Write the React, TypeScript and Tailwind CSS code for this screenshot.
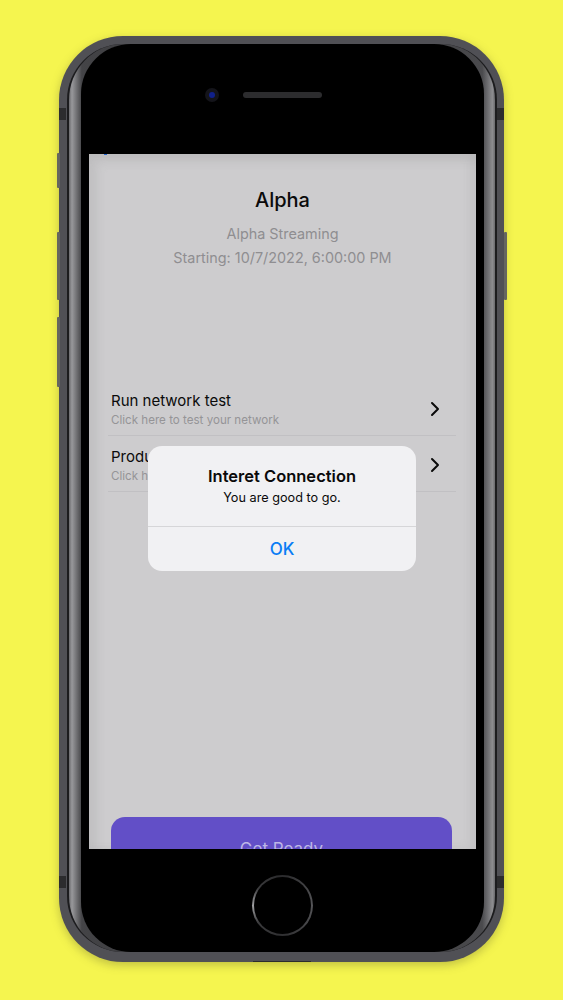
import React from "react";
import { ChevronRight } from "lucide-react";

function Row({ title, sub }: { title: string; sub: string }) {
  return (
    <div className="ml-[19px] mr-[20px] flex h-[56px] items-center justify-between border-b border-[#c1c0c3] pl-[3px] pr-[9px] pt-[2px]">
      <div className="flex flex-col pt-[2px]">
        <span className="text-[15px] leading-[20px] text-[#0a0a0a]">{title}</span>
        <span className="mt-[1px] text-[11.6px] leading-[16px] text-[#959497]">{sub}</span>
      </div>
      <ChevronRight className="h-[24px] w-[24px] text-[#0a0a0a]" strokeWidth={2} />
    </div>
  );
}

function SideButton({ cls }: { cls: string }) {
  return <div className={`absolute w-[3px] rounded-[1px] bg-[#66665f] ${cls}`} />;
}

function Notch({ cls }: { cls: string }) {
  return <div className={`absolute bg-[#2c2c2e] ${cls}`} />;
}

export default function App() {
  return (
    <div className="h-[1000px] w-[563px] overflow-hidden bg-[#f5f54f] pl-[59px] pt-[36px] [font-family:Inter,'Liberation_Sans',sans-serif]">
      <div className="relative h-[926px] w-[445px] rounded-[64px] bg-[#505055] pb-[10px] pl-[8px] pr-[7px] pt-[8px] shadow-[0_3px_10px_rgba(90,90,40,0.35)]">
        <SideButton cls="left-[-2px] top-[117px] h-[35px]" />
        <SideButton cls="left-[-2px] top-[196px] h-[68px]" />
        <SideButton cls="left-[-2px] top-[281px] h-[70px]" />
        <SideButton cls="right-[-3px] top-[196px] h-[68px]" />
        <Notch cls="left-0 top-[72px] h-[12px] w-[7px]" />
        <Notch cls="right-0 top-[72px] h-[12px] w-[7px]" />
        <Notch cls="bottom-[74px] left-0 h-[12px] w-[7px]" />
        <Notch cls="bottom-[74px] right-0 h-[12px] w-[7px]" />
        <Notch cls="bottom-0 left-[194px] h-[1px] w-[58px]" />
        <div className="h-full rounded-[56px] border-x-[2px] border-[#1c1c1e] bg-[linear-gradient(90deg,#6a6a6d_0%,#98989b_0.7%,#444447_3%,#2a2a2c_50%,#4a4a4d_97%,#8c8c8f_99.4%,#6a6a6d_100%)] pl-[12px] pr-[11px]">
          <div className="flex h-full flex-col items-center rounded-[50px] bg-black">
            <div className="flex h-[110px] w-full items-center justify-center gap-[24px] pb-[8px] pr-[38px]">
              <div className="flex h-[14px] w-[14px] items-center justify-center rounded-full bg-[#14141a]">
                <div className="h-[6px] w-[6px] rounded-full bg-[#10208a]" />
              </div>
              <div className="h-[6px] w-[79px] rounded-full bg-[#2c2c2e]" />
            </div>
            <div className="relative h-[695px] w-[387px] shrink-0 overflow-hidden bg-[#cdccce] shadow-[inset_8px_8px_10px_rgba(150,150,150,0.22),inset_-6px_0_8px_rgba(150,150,150,0.18)]">
              <div className="absolute left-[15px] top-[-1px] h-[2px] w-[3px] bg-[#2a6ad0]" />
              <div className="flex h-full flex-col">
                <div className="pt-[33px] text-center text-[20px] font-medium leading-[26px] text-[#0a0a0a]">Alpha</div>
                <div className="mt-[9px] text-center text-[14.4px] leading-[24px] text-[#8f8e91]">Alpha Streaming</div>
                <div className="text-center text-[14.4px] leading-[24px] text-[#8f8e91]">Starting: 10/7/2022, 6:00:00 PM</div>
                <div className="mt-[110px] flex flex-col">
                  <Row title="Run network test" sub="Click here to test your network" />
                  <Row title="Product check" sub="Click here to check your product" />
                </div>
                <div className="ml-[22px] mr-[24px] mt-[325px] flex h-[70px] shrink-0 justify-center rounded-[14px] bg-[#624fc7] pt-[20px] text-[17px] leading-[24px] text-[#bdb6e6]">
                  Get Ready
                </div>
              </div>
              <div className="absolute left-[59px] top-[292px] flex h-[125px] w-[268px] flex-col rounded-[14px] bg-[#f1f1f3] text-center">
                <div className="flex h-[81px] flex-col items-center border-b border-[#d6d6d8] pt-[19px]">
                  <span className="text-[16.5px] font-semibold leading-[22px] text-[#0a0a0a]">Interet Connection</span>
                  <span className="mt-[2px] text-[12.7px] leading-[18px] text-[#0a0a0a]">You are good to go.</span>
                </div>
                <div className="flex flex-1 items-center justify-center pt-[2px] text-[17px] font-medium text-[#0a7df5]">OK</div>
              </div>
            </div>
            <div className="flex w-full flex-1 items-center justify-center pt-[9px]">
              <div className="flex h-[61px] w-[61px] items-center justify-center rounded-full bg-[conic-gradient(#2a2a2c,#555558_25%,#2f2f31_50%,#3a3a3c_65%,#a0a0a2_75%,#3a3a3c_85%,#2a2a2c)]">
                <div className="h-[57px] w-[57px] rounded-full bg-black" />
              </div>
            </div>
          </div>
        </div>
      </div>
    </div>
  );
}
